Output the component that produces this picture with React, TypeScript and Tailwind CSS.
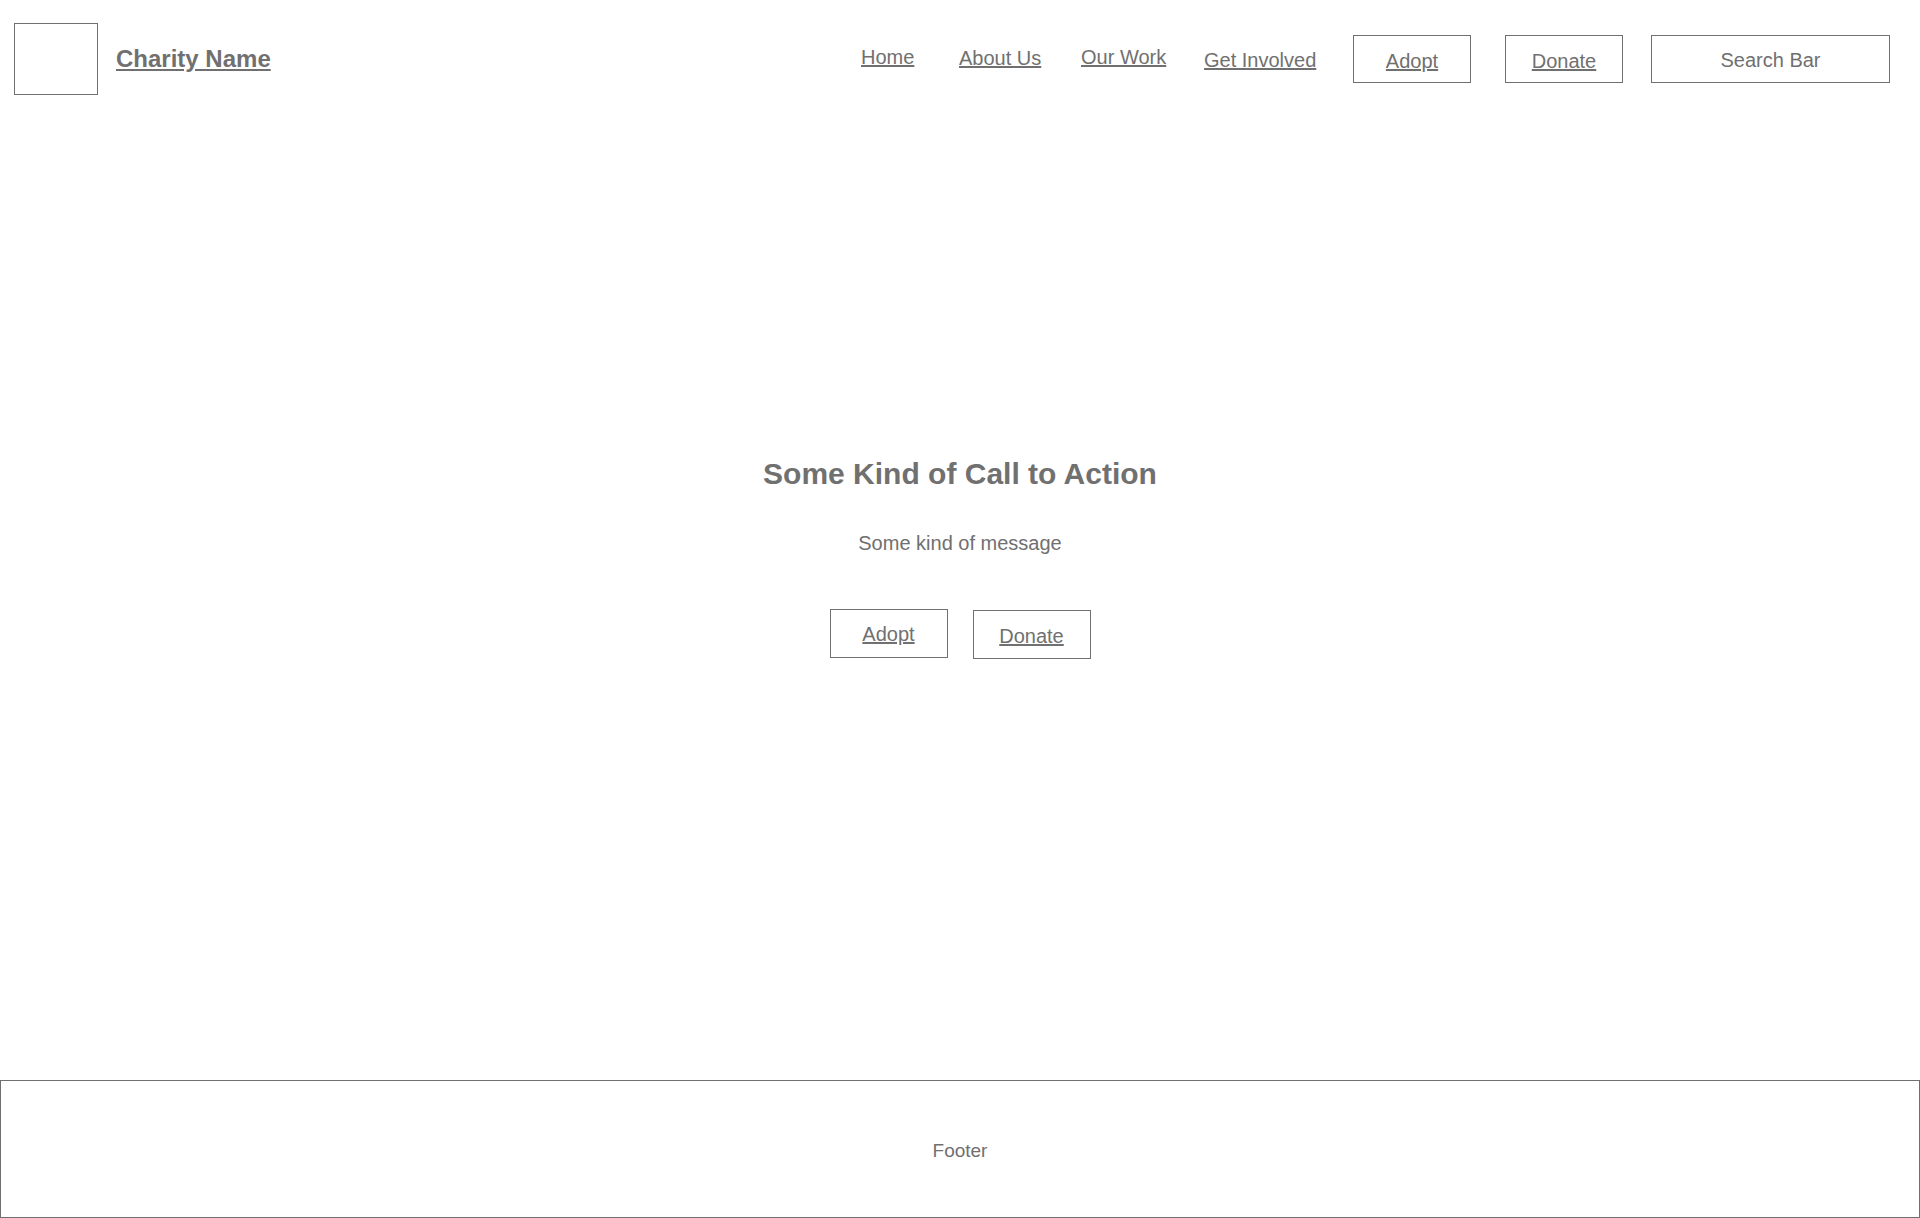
import React from 'react';

const navLinks = [
  { label: 'Home', width: 'w-[98px]', shift: 'mb-[4px]' },
  { label: 'About Us', width: 'w-[122px]', shift: 'mb-[2px]' },
  { label: 'Our Work', width: 'w-[123px]', shift: 'mb-[4px]' },
  { label: 'Get Involved', width: 'w-[149px]', shift: 'mt-[2px]' },
];

export default function App() {
  return (
    <div
      className="h-[1218px] w-full bg-white flex flex-col text-[#707070]"
      style={{ fontFamily: '"Liberation Sans", Arial, sans-serif' }}
    >
      {/* Header */}
      <header className="flex items-center pt-[23px] pl-[14px] pr-[30px]">
        <div className="w-[84px] h-[72px] border border-[#707070] shrink-0" />
        <a href="#" className="ml-[18px] text-[24px] leading-[24px] font-bold underline">
          Charity Name
        </a>

        <nav className="ml-auto flex items-center">
          {navLinks.map((link) => (
            <div key={link.label} className={`${link.width} flex`}>
              <a href="#" className={`text-[20px] leading-[20px] underline ${link.shift}`}>
                {link.label}
              </a>
            </div>
          ))}
          <a
            href="#"
            className="w-[118px] h-[48px] border border-[#707070] flex items-center justify-center pt-[4px] text-[20px] leading-[20px] underline"
          >
            Adopt
          </a>
          <a
            href="#"
            className="ml-[34px] w-[118px] h-[48px] border border-[#707070] flex items-center justify-center pt-[4px] text-[20px] leading-[20px] underline"
          >
            Donate
          </a>
          <div className="ml-[28px] w-[239px] h-[48px] border border-[#707070] flex items-center justify-center pt-[2px] text-[20px] leading-[20px]">
            Search Bar
          </div>
        </nav>
      </header>

      {/* Hero */}
      <main className="flex-1 flex flex-col items-center pt-[364px]">
        <h1 className="text-[30px] leading-[30px] font-bold">Some Kind of Call to Action</h1>
        <p className="mt-[44px] text-[20px] leading-[20px]">Some kind of message</p>
        <div className="mt-[56px] flex items-start gap-[25px]">
          <a
            href="#"
            className="w-[118px] h-[49px] border border-[#707070] flex items-center justify-center text-[20px] leading-[20px] underline"
          >
            Adopt
          </a>
          <a
            href="#"
            className="mt-[1px] w-[118px] h-[49px] border border-[#707070] flex items-center justify-center pt-[2px] text-[20px] leading-[20px] underline"
          >
            Donate
          </a>
        </div>
      </main>

      {/* Footer */}
      <footer className="h-[138px] border border-[#707070] flex items-center justify-center pt-[3px] text-[19px] leading-[19px]">
        Footer
      </footer>
    </div>
  );
}
